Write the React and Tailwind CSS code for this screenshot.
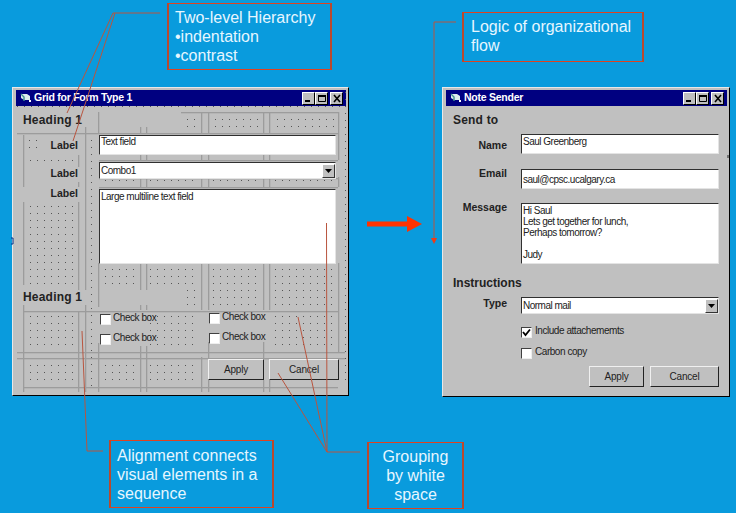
import React from "react";

const FONT = "font-['Liberation_Sans',Arial,sans-serif]";

function TitleIcon() {
  return (
    <svg width="12" height="10" viewBox="0 0 12 10" className="ml-[1px] shrink-0">
      <path d="M1 1h6l3 2v4H4L1 5z" fill="#dcecec" />
      <path d="M1 1l3 3v4" fill="none" stroke="#3f8f8f" strokeWidth="1.4" />
      <rect x="9" y="7" width="2" height="2" fill="#fff" />
    </svg>
  );
}

function CaptionButton({ kind, className = "" }) {
  return (
    <div className={`flex h-[13px] w-[13px] items-center justify-center border border-t-white border-l-white border-r-black border-b-black bg-[#c0c0c0] ${className}`}>
      <svg width="10" height="9" viewBox="0 0 10 9">
        {kind === "min" && <rect x="1" y="6" width="5" height="2" fill="#000" />}
        {kind === "max" && <path d="M1.5 2V7.5H8.5V1.5H1.5" fill="none" stroke="#000" strokeWidth="1" />}
        {kind === "max" && <rect x="1" y="1" width="8" height="2" fill="#000" />}
        {kind === "close" && <path d="M2 1l6 7M8 1L2 8" stroke="#000" strokeWidth="1.6" />}
      </svg>
    </div>
  );
}

function Window({ title, className, children }) {
  return (
    <div className={`absolute flex flex-col border border-t-[#e8e8e8] border-l-[#e8e8e8] border-r-black border-b-black bg-[#c0c0c0] p-[2px] pl-[3px] ${className}`}>
      <div className="flex h-[16px] shrink-0 items-center gap-[2px] bg-[#000080] pl-[3px] pr-[3px]">
        <TitleIcon />
        <span className="text-[10.5px] font-bold tracking-[-0.25px] text-white">{title}</span>
        <div className="ml-auto flex">
          <CaptionButton kind="min" />
          <CaptionButton kind="max" className="mr-[2px]" />
          <CaptionButton kind="close" />
        </div>
      </div>
      <div className="relative min-h-0 flex-1">{children}</div>
    </div>
  );
}

function Sunken({ className = "", children }) {
  return (
    <div className={`border border-t-[#303030] border-l-[#303030] border-r-[#e4e4e4] border-b-[#e4e4e4] bg-white text-[10px] tracking-[-0.5px] text-[#222] ${className}`}>
      {children}
    </div>
  );
}

function Combo({ text, className = "" }) {
  return (
    <Sunken className={`flex items-center pl-[1px] ${className}`}>
      <span className="flex-1">{text}</span>
      <div className="flex h-[14px] w-[13px] items-center justify-center border border-t-white border-l-white border-r-[#333] border-b-[#333] bg-[#c0c0c0]">
        <svg width="7" height="4" viewBox="0 0 7 4"><path d="M0 0h7L3.5 4z" fill="#000" /></svg>
      </div>
    </Sunken>
  );
}

function Check({ label, checked, wide }) {
  return (
    <div className={`flex h-[11px] items-center text-[10px] leading-[12px] tracking-[-0.45px] text-[#222] ${wide ? "gap-[3px]" : "gap-[2px]"}`}>
      <div className="flex h-[11px] w-[11px] shrink-0 items-center justify-center border border-t-[#404040] border-l-[#404040] border-r-[#eee] border-b-[#eee] bg-white">
        {checked && (
          <svg width="9" height="9" viewBox="0 0 9 9"><path d="M1 4l2.5 3L8 1.5" fill="none" stroke="#000" strokeWidth="1.8" /></svg>
        )}
      </div>
      <span className="-mt-[4px]">{label}</span>
    </div>
  );
}

function Button({ label, className = "" }) {
  return (
    <div className={`flex h-[21px] shrink-0 items-center justify-center border border-t-[#f0f0f0] border-l-[#f0f0f0] border-r-[#222] border-b-[#222] bg-[#c0c0c0] text-[10px] tracking-[-0.2px] text-[#222] ${className}`}>
      {label}
    </div>
  );
}

const V_LINES = [
  [23, [[135, 187], [202, 285], [305, 392]]],
  [78, [[155, 167], [182, 187], [202, 290], [311, 392]]],
  [85, [[127, 290], [305, 392]]],
  [98, [[112, 134], [263, 307], [343, 392]]],
  [140, [[127, 133], [153, 160], [177, 187], [263, 290], [305, 310], [346, 392]]],
  [146, [[127, 133], [153, 160], [177, 187], [263, 290], [305, 310], [346, 392]]],
  [201, [[112, 133], [153, 160], [177, 187], [263, 310], [357, 392]]],
  [208, [[112, 133], [153, 160], [177, 187], [263, 310], [342, 358], [380, 392]]],
  [263, [[112, 133], [153, 160], [177, 187], [263, 310], [342, 358], [380, 392]]],
  [269, [[112, 133], [153, 160], [177, 187], [263, 310], [380, 392]]],
  [338, [[112, 160], [177, 187], [263, 353]]],
];
const H_LINES = [
  [181, 338, 112], [17, 98, 133], [98, 338, 133], [99, 338, 160], [99, 338, 178], [99, 338, 187],
  [23, 338, 311], [17, 345, 352], [17, 345, 358], [23, 338, 387],
];
const DOT_REGIONS = [
  [29, 140, 38, 153], [30, 160, 72, 160], [30, 206, 72, 285], [30, 316, 72, 345], [30, 365, 72, 380],
  [91, 140, 91, 387], [345, 92, 345, 385], [17, 106, 345, 106],
  [187, 119, 196, 126], [215, 119, 257, 126], [277, 119, 335, 126],
  [105, 180, 135, 180], [150, 180, 197, 180], [213, 180, 257, 180], [275, 180, 335, 180],
  [105, 269, 135, 283], [150, 269, 197, 283], [187, 290, 197, 304], [213, 269, 257, 304], [275, 269, 335, 304],
  [150, 316, 197, 345], [275, 316, 335, 345], [105, 365, 135, 380], [150, 365, 197, 380],
];

function GridGuides() {
  const dots = [];
  DOT_REGIONS.forEach(([x1, y1, x2, y2], r) => {
    for (let y = y1; y <= y2; y += 7) {
      for (let x = x1; x <= x2; x += 7) {
        dots.push(<rect key={`${r}-${x}-${y}`} x={x} y={y} width="1" height="1" fill="#555" />);
      }
    }
  });
  return (
    <svg width="736" height="513" className="absolute left-0 top-0">
      {V_LINES.map(([x, segs]) =>
        segs.map(([a, b]) => <rect key={`${x}-${a}`} x={x} y={a} width="1.3" height={b - a} fill="#9c9c9c" />)
      )}
      {H_LINES.map(([a, b, y], i) => (
        <rect key={i} x={a} y={y} width={b - a} height="1.3" fill="#9c9c9c" />
      ))}
      {dots}
    </svg>
  );
}

function Note({ className, children }) {
  return (
    <div className={`absolute border-y border-x-2 border-x-[#b8492e] border-y-[#e0421f] text-[16px] leading-[19px] text-[#e6f6ff] ${className}`}>
      {children}
    </div>
  );
}

function Annotations() {
  return (
    <svg width="736" height="513" className="absolute left-0 top-0" fill="none" stroke="#b9553f" strokeWidth="1">
      <path d="M160 13H113L67 113M115 13L73 141" />
      <path d="M456 22H434V238" />
      <path d="M434 244l-3-6h6z" fill="#f03a14" stroke="none" />
      <path d="M82 331L87 451H103" />
      <path d="M360 452H327L326.5 223M327 452L298 317M327 452L278 373" />
      <path d="M367 224H408" stroke="#ff3300" strokeWidth="5" />
      <path d="M422 224l-15-8v16z" fill="#ff3300" stroke="none" />
      <path d="M11 238h2v6h-2" stroke="#00308a" />
      <path d="M728 155v3" stroke="#222" />
    </svg>
  );
}

function FieldRow({ label, labelClass = "pt-[3px]", className = "", children }) {
  return (
    <div className={`flex items-start ${className}`}>
      <div className={`w-[54px] shrink-0 text-right text-[10.5px] font-bold text-[#222] ${labelClass}`}>{label}</div>
      <div className="ml-[14px] flex-1">{children}</div>
    </div>
  );
}

export default function App() {
  return (
    <div className={`relative h-[513px] w-[736px] overflow-hidden bg-[#099bdd] ${FONT}`}>
      <Window title="Grid for Form Type 1" className="left-[12px] top-[87px] h-[309px] w-[337px]">
        <div className="absolute -left-[16px] -top-[106px]"><GridGuides /></div>
        <div className="relative flex h-full flex-col pl-[7px] pr-[10px]">
          <div className="mt-[7px] text-[12px] font-bold leading-[15px] tracking-[0.2px] text-[#222]">Heading 1</div>
          <div className="mt-[7px] flex">
            <div className="flex w-[76px] shrink-0 flex-col items-end pr-[21px] text-[10.5px] font-bold text-[#222]">
              <div className="mt-[3px] leading-[14px]">Label</div>
              <div className="mt-[14px] leading-[14px]">Label</div>
              <div className="mt-[6px] leading-[14px]">Label</div>
            </div>
            <div className="flex flex-1 flex-col">
              <Sunken className="h-[20px] pl-[1px] leading-[12px]">Text field</Sunken>
              <Combo text="Combo1" className="mt-[7px] h-[17px]" />
              <Sunken className="mt-[10px] h-[75px] pl-[1px] pt-[1px] leading-[12px]">Large multiline text field</Sunken>
            </div>
          </div>
          <div className="mt-[26px] text-[12px] font-bold leading-[15px] tracking-[0.2px] text-[#222]">Heading 1</div>
          <div className="mt-[7px] flex">
            <div className="ml-[77px] flex w-[109px] shrink-0 flex-col gap-[9px] pt-[2px]">
              <Check label="Check box" />
              <Check label="Check box" />
            </div>
            <div className="flex flex-col gap-[9px] pt-[1px]">
              <Check label="Check box" />
              <Check label="Check box" />
            </div>
          </div>
          <div className="ml-[185px] mt-[14px] flex gap-[5px]">
            <Button label="Apply" className="w-[56px]" />
            <Button label="Cancel" className="w-[70px]" />
          </div>
        </div>
      </Window>

      <Window title="Note Sender" className="left-[442px] top-[87px] h-[310px] w-[288px]">
        <div className="flex h-full flex-col pl-[7px] pr-[8px]">
          <div className="mt-[7px] text-[12px] font-bold leading-[15px] tracking-[0.2px] text-[#222]">Send to</div>
          <FieldRow label="Name" labelClass="pt-[4px]" className="mt-[6px]">
            <Sunken className="h-[20px] pl-[1px] leading-[14px]">Saul Greenberg</Sunken>
          </FieldRow>
          <FieldRow label="Email" labelClass="-mt-[3px]" className="mt-[15px]">
            <Sunken className="flex h-[20px] items-center pl-[1px]">saul@cpsc.ucalgary.ca</Sunken>
          </FieldRow>
          <FieldRow label="Message" labelClass="-mt-[3px]" className="mt-[14px]">
            <Sunken className="h-[61px] pl-[1px] pt-[1px] leading-[11px]">
              <div>Hi Saul</div>
              <div>Lets get together for lunch,</div>
              <div>Perhaps tomorrow?</div>
              <div>&nbsp;</div>
              <div>Judy</div>
            </Sunken>
          </FieldRow>
          <div className="mt-[12px] text-[12px] font-bold leading-[15px] text-[#222]">Instructions</div>
          <FieldRow label="Type" labelClass="-mt-[1px]" className="mt-[6px]">
            <Combo text="Normal mail" className="h-[17px]" />
          </FieldRow>
          <div className="ml-[68px] mt-[13px] flex flex-col gap-[10px]">
            <Check label="Include attachememts" checked wide />
            <Check label="Carbon copy" wide />
          </div>
          <div className="mt-[7px] flex justify-end gap-[6px]">
            <Button label="Apply" className="w-[55px]" />
            <Button label="Cancel" className="w-[69px]" />
          </div>
        </div>
      </Window>

      <Annotations />

      <Note className="left-[167px] top-[3px] h-[67px] w-[165px] pl-[6px] pt-[4px]">
        <div>Two-level Hierarchy</div>
        <div>•indentation</div>
        <div>•contrast</div>
      </Note>
      <Note className="left-[462px] top-[12px] h-[50px] w-[182px] pl-[7px] pt-[4px]">
        <div>Logic of organizational</div>
        <div>flow</div>
      </Note>
      <Note className="left-[109px] top-[440px] h-[68px] w-[165px] pl-[6px] pt-[5px]">
        <div>Alignment connects</div>
        <div>visual elements in a</div>
        <div>sequence</div>
      </Note>
      <Note className="left-[367px] top-[442px] h-[67px] w-[97px] pt-[4px] text-center">
        <div>Grouping</div>
        <div>by white</div>
        <div>space</div>
      </Note>
    </div>
  );
}
